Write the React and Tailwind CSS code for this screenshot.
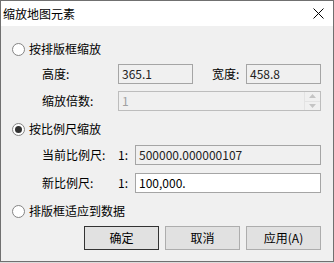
import React from 'react';

const FONT = { fontFamily: '"Noto Sans CJK SC", "Microsoft YaHei", sans-serif' };

const Radio = ({ checked, label }) => (
  <div className="flex items-center h-[20px] pl-[11px]">
    <span className="w-[13px] h-[13px] rounded-full border border-[#848484] bg-white flex items-center justify-center">
      {checked && <span className="w-[7px] h-[7px] rounded-full bg-[#333]" />}
    </span>
    <span className="ml-[4px] text-[12px] leading-none text-black">{label}</span>
  </div>
);

const Field = ({ w, children, white, muted }) => (
  <div
    className={`h-[20px] border border-[#a5a5a5] flex items-center pl-[3px] text-[12px] leading-none ${white ? 'bg-white text-black' : 'bg-[#f0f0f0]'} ${muted ? 'text-[#a0a0a0]' : 'text-[#222]'} ${w}`}
  >
    {children}
  </div>
);

const Label = ({ children, w = 'w-[76px]' }) => (
  <span className={`text-[12px] leading-none text-black ${w}`}>{children}</span>
);

const Btn = ({ children, primary }) => (
  <button
    className={`w-[75px] h-[24px] bg-[#e1e1e1] text-[12px] leading-none text-black border ${primary ? 'border-[#333]' : 'border-[#adadad]'}`}
  >
    {children}
  </button>
);

export default function App() {
  return (
    <div className="w-[334px] h-[263px] bg-[#dcdcdc]" style={FONT}>
      <div className="w-[334px] h-[262px] border border-[#707070] bg-[#f0f0f0] flex flex-col">
        {/* title bar */}
        <div className="h-[25px] bg-white flex items-center justify-between pl-[2px] pr-[9px]">
          <span className="text-[12px] leading-none text-black">缩放地图元素</span>
          <svg width="11" height="11" viewBox="0 0 11 11">
            <path d="M0.5 0.5 L10.5 10.5 M10.5 0.5 L0.5 10.5" stroke="#000" strokeWidth="1" />
          </svg>
        </div>

        <div className="flex flex-col pt-[13px]">
          <Radio label="按排版框缩放" />

          <div className="flex items-center h-[20px] mt-[5px] pl-[41px]">
            <Label>高度:</Label>
            <Field w="w-[75px]">365.1</Field>
            <span className="ml-[19px] w-[34px] text-[12px] leading-none text-black">宽度:</span>
            <Field w="w-[75px]">458.8</Field>
          </div>

          <div className="flex items-center h-[20px] mt-[7px] pl-[41px]">
            <Label>缩放倍数:</Label>
            <div className="w-[203px] h-[20px] border border-[#bdbdbd] bg-[#f0f0f0] flex">
              <span className="flex-1 pl-[3px] flex items-center text-[12px] leading-none text-[#a0a0a0]">1</span>
              <div className="w-[16px] flex flex-col border-l border-[#e3e3e3]">
                <div className="flex-1 flex items-center justify-center">
                  <svg width="7" height="4" viewBox="0 0 7 4"><path d="M0 4 L3.5 0 L7 4 Z" fill="#c4c4c4" /></svg>
                </div>
                <div className="flex-1 flex items-center justify-center border-t border-[#e3e3e3]">
                  <svg width="7" height="4" viewBox="0 0 7 4"><path d="M0 0 L3.5 4 L7 0 Z" fill="#c4c4c4" /></svg>
                </div>
              </div>
            </div>
          </div>

          <div className="mt-[8px]">
            <Radio checked label="按比例尺缩放" />
          </div>

          <div className="flex items-center h-[20px] mt-[6px] pl-[41px]">
            <Label>当前比例尺:</Label>
            <span className="w-[17px] text-[12px] leading-none text-black">1:</span>
            <Field w="w-[186px]">500000.000000107</Field>
          </div>

          <div className="flex items-center h-[20px] mt-[8px] pl-[41px]">
            <Label>新比例尺:</Label>
            <span className="w-[17px] text-[12px] leading-none text-black">1:</span>
            <Field w="w-[186px]" white>100,000.</Field>
          </div>

          <div className="mt-[8px]">
            <Radio label="排版框适应到数据" />
          </div>

          <div className="flex gap-[6px] mt-[5px] pl-[83px]">
            <Btn primary>确定</Btn>
            <Btn>取消</Btn>
            <Btn>应用(A)</Btn>
          </div>
        </div>
      </div>
    </div>
  );
}
